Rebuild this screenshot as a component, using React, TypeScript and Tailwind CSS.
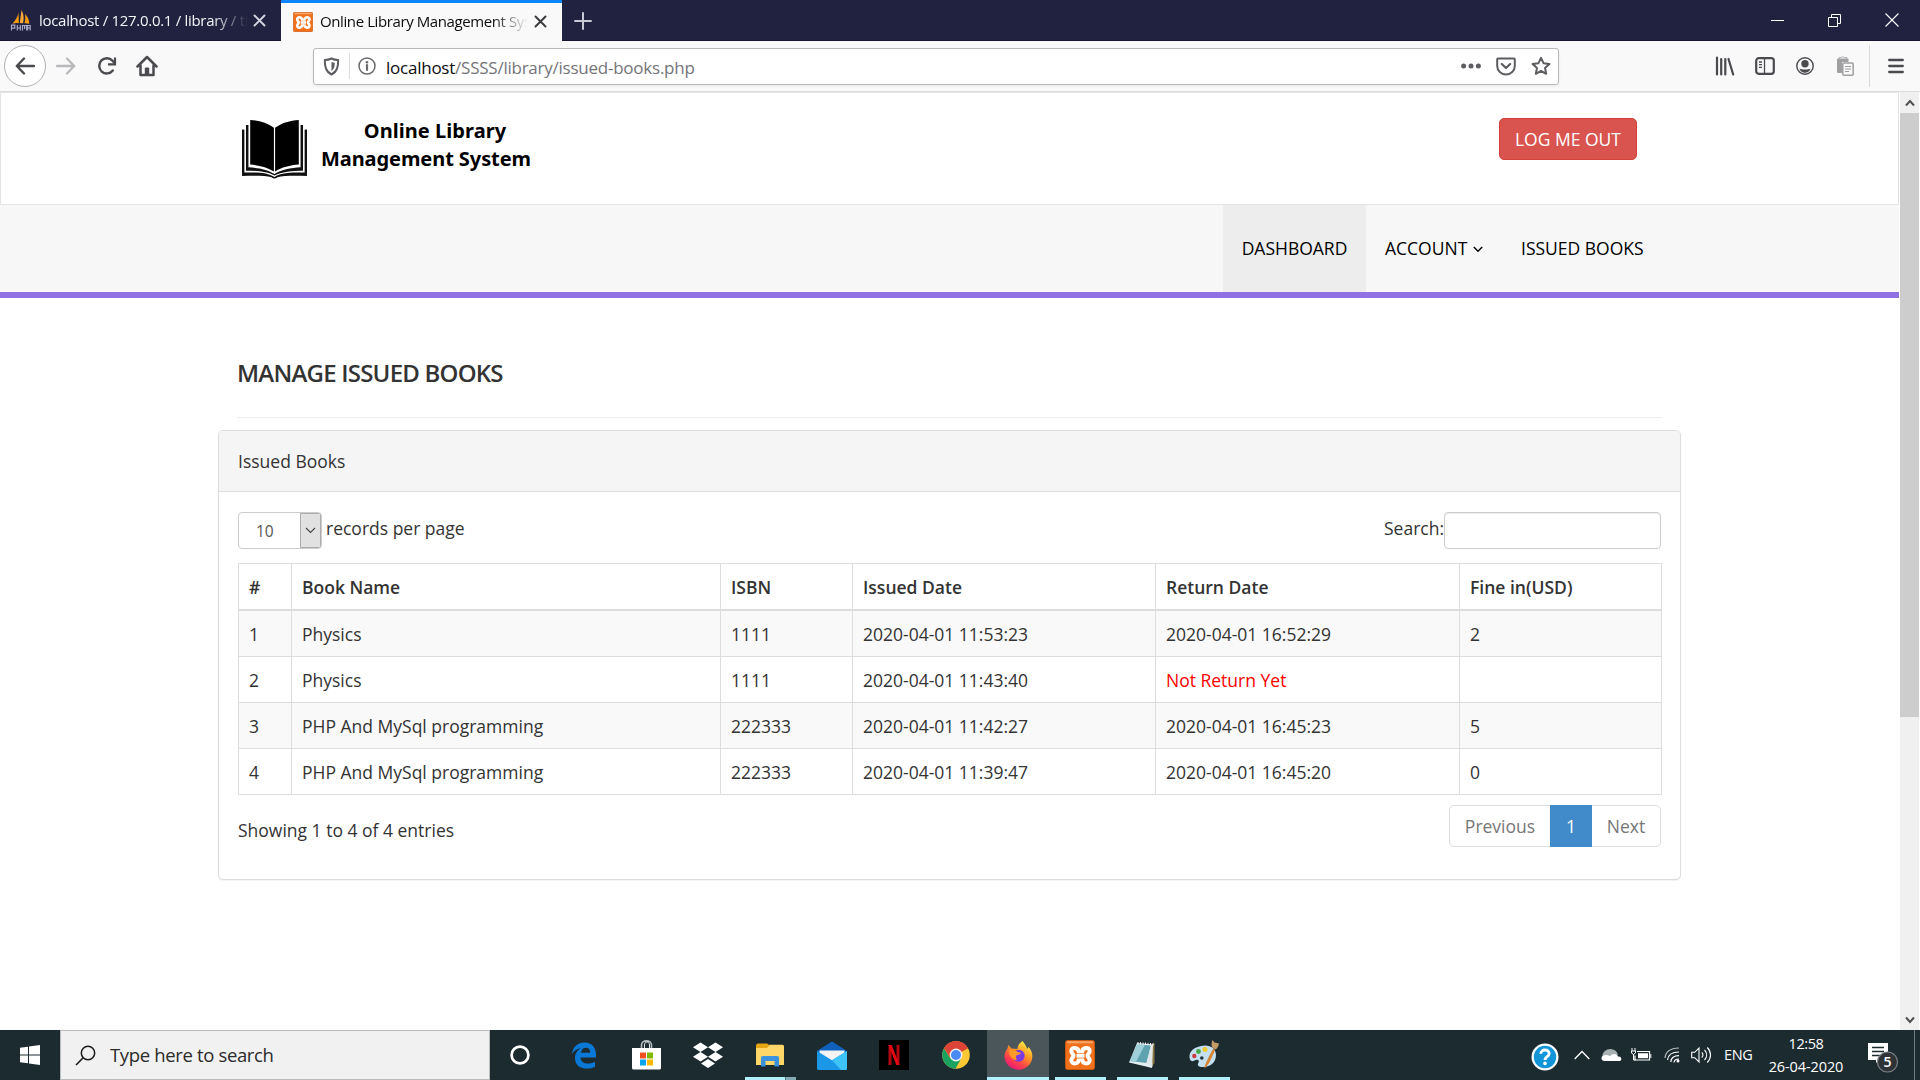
import React from "react";

type IconProps = { className?: string };

function Box({ w, h, vb, className = "", children }: { w: number; h: number; vb?: string; className?: string; children: React.ReactNode }) {
  return (
    <svg width={w} height={h} viewBox={vb ?? `0 0 ${w} ${h}`} className={`block shrink-0 ${className}`} fill="none">
      {children}
    </svg>
  );
}

function XamppIcon({ size, h }: { size: number; h: number }) {
  return (
    <svg width={size} height={h} viewBox="0 0 30 30" preserveAspectRatio="none" className="block shrink-0">
      <rect x="0.5" y="0.5" width="29" height="29" rx="2" fill="#f0701c" stroke="#c9580f" />
      <rect x="2" y="1.200" width="26" height="2" rx="1" fill="#f9a76c" />
      <g fill="none" stroke="#fff" strokeWidth="4" strokeLinejoin="round">
        <path d="M14 13C14 7 6 6.500 6.300 11.300c.2 2 2.200 2.700 2.200 4.400s-2 2.400-2.200 4.400C6 25 14 24.500 14 18.500" />
        <path d="M17 13C17 7 25 6.500 24.700 11.300c-.2 2-2.200 2.700-2.200 4.400s2 2.400 2.200 4.400C25 25 17 24.500 17 18.500" />
        <path d="M11.500 15.700h8" />
      </g>
    </svg>
  );
}

function TabClose({ className = "" }: IconProps) {
  return (
    <Box w={13} h={13} className={className}>
      <path d="M1.500 1.500l10 10M11.500 1.500l-10 10" stroke="currentColor" strokeWidth="1.900" strokeLinecap="round" />
    </Box>
  );
}

function TabStrip() {
  return (
    <div className="flex h-[41px] border-b border-[#16172e] bg-[#20223f] text-[15px] tracking-[-0.3px]">
      <div className="flex h-[41px] w-[281px] items-center text-[#f4f4f8]">
        <Box w={21} h={21} className="ml-[10px]">
          <path d="M8.500 1.500C8.500 6 5.500 10 2.500 13.800c2.500-.8 4.500-.8 6.300-.6z" fill="#f89c0e" />
          <path d="M11.500 0c2.500 4 2.500 9 1.500 13.300l-3.200-.2z" fill="#f9a93a" />
          <path d="M15 4c3 3 4 6 4.300 9.800-1.800-.6-3.300-.8-4.800-.6C15.500 10 15.500 7 15 4z" fill="#f89c0e" />
          <path d="M1.500 20.500v-5.300h3.300v3H2M7.300 20.500v-5.500M7.300 18h3V15v5.500M12.500 20.500v-5h4.200v5M14.600 15.500V19M17.500 18h2.700M17.500 20.500v-5h2.700v5" stroke="#a9abc6" strokeWidth="1.200" />
        </Box>
        <div className="ml-[8px] w-[209px] overflow-hidden whitespace-nowrap [mask-image:linear-gradient(to_right,#000_83%,transparent_100%)]">
          localhost / 127.0.0.1 / library / tb
        </div>
        <TabClose className="ml-[5px] text-[#d5d5df]" />
      </div>
      <div className="flex h-[42px] w-[281px] items-center border-t-[3px] border-[#0a84ff] bg-[#f9f9fa] pb-[2px] text-[#0c0c0d]">
        <div className="ml-[12px]">
          <XamppIcon size={20} h={20} />
        </div>
        <div className="ml-[7px] w-[208px] overflow-hidden whitespace-nowrap tracking-[-0.4px] [mask-image:linear-gradient(to_right,#000_83%,transparent_100%)]">
          Online Library Management System
        </div>
        <TabClose className="ml-[6px] text-[#38383d]" />
      </div>
      <div className="flex h-[41px] w-[42px] items-center justify-center">
        <Box w={18} h={18}>
          <path d="M9 1v16M1 9h16" stroke="#c9c9d6" strokeWidth="2" strokeLinecap="round" />
        </Box>
      </div>
      <div className="ml-auto flex h-[40px] w-[171px] items-center">
        <div className="flex w-[57px] justify-center">
          <Box w={13} h={13}>
            <path d="M0 6.500h13" stroke="#fff" />
          </Box>
        </div>
        <div className="flex w-[57px] justify-center">
          <Box w={13} h={13}>
            <path d="M.5 3.500h9v9h-9zM3.500 3.500v-3h9v9h-3" stroke="#fff" />
          </Box>
        </div>
        <div className="flex w-[57px] justify-center">
          <Box w={14} h={14}>
            <path d="M.5.5l13 13M13.500.5l-13 13" stroke="#fff" strokeWidth="1.100" />
          </Box>
        </div>
      </div>
    </div>
  );
}

function Toolbar() {
  return (
    <div className="flex h-[51px] items-center border-b border-[#dcdcdc] bg-[#f9f9fa]">
      <div className="ml-[4px] flex h-[42px] w-[42px] items-center justify-center rounded-full border border-[#b1b1b1] bg-white">
        <Box w={20} h={18}>
          <path d="M19 9H2M9 1.500L1.800 9 9 16.500" stroke="#4a4a4f" strokeWidth="2.400" strokeLinecap="round" strokeLinejoin="round" />
        </Box>
      </div>
      <Box w={20} h={18} className="ml-[10px]">
        <path d="M1 9h17M11 1.500L18.200 9 11 16.500" stroke="#b9b9bb" strokeWidth="2.300" strokeLinecap="round" strokeLinejoin="round" />
      </Box>
      <Box w={20} h={20} className="ml-[21px]">
        <path d="M15.800 14.500A7.600 7.600 0 1 1 15.500 4.800L17.500 7" stroke="#4a4a4f" strokeWidth="2.400" strokeLinecap="round" />
        <path d="M18 1.500v6.800h-7" stroke="#4a4a4f" strokeWidth="2.200" />
      </Box>
      <Box w={22} h={22} className="ml-[19px]">
        <path d="M1.500 11.500L11 2l9.500 9.500M4.500 10.500V20h13v-9.500" stroke="#4a4a4f" strokeWidth="2.500" strokeLinecap="round" strokeLinejoin="round" />
        <path d="M8.800 20v-6.500a1 1 0 0 1 1-1h2.400a1 1 0 0 1 1 1V20z" fill="#4a4a4f" />
      </Box>
      <div className="ml-[155px] flex h-[37px] w-[1246px] items-center rounded-[3px] border border-[#b9b9bb] bg-white shadow-[0_1px_3px_rgba(0,0,0,0.08)]">
        <Box w={17} h={19} className="ml-[9px]">
          <path d="M8.500 1.500C6.500 2.500 4 3 1.800 3c0 7 1 11.500 6.700 14.500C14.200 14.500 15.200 10 15.200 3 13 3 10.500 2.500 8.500 1.500z" stroke="#5c5c61" strokeWidth="2" strokeLinejoin="round" />
          <path d="M8.500 5c1 .4 2 .6 3.300.7-.1 4-.8 6.300-3.300 8.200z" fill="#5c5c61" />
        </Box>
        <div className="ml-[9px] h-[26px] w-px bg-[#dcdcde]" />
        <Box w={18} h={18} className="ml-[8px]">
          <circle cx="9" cy="9" r="8" stroke="#6a6a6f" strokeWidth="1.500" />
          <path d="M9 8v5" stroke="#6a6a6f" strokeWidth="2.200" strokeLinecap="round" />
          <circle cx="9" cy="5.200" r="1.300" fill="#6a6a6f" />
        </Box>
        <div className="ml-[10px] pt-[3px] text-[17px] tracking-[-0.24px] whitespace-nowrap text-[#747479]">
          <span className="text-[#0c0c0d]">localhost</span>/SSSS/library/issued-books.php
        </div>
        <Box w={20} h={6} className="ml-auto">
          <g fill="#5c5c61">
            <circle cx="2.600" cy="3" r="2.500" />
            <circle cx="10" cy="3" r="2.500" />
            <circle cx="17.400" cy="3" r="2.500" />
          </g>
        </Box>
        <Box w={20} h={19} className="ml-[15px]">
          <path d="M2 1.500h16c.5 0 .8.4.8.9V9c0 4.800-4 8.500-8.800 8.500S1.200 13.800 1.200 9V2.400c0-.5.300-.9.800-.9z" stroke="#5c5c61" strokeWidth="2" />
          <path d="M5.800 7l4.200 4 4.200-4" stroke="#5c5c61" strokeWidth="2.200" strokeLinecap="round" strokeLinejoin="round" />
        </Box>
        <Box w={20} h={20} className="mr-[7px] ml-[15px]">
          <path d="M10 1.800l2.500 5.400 5.900.7-4.400 4 1.200 5.900L10 14.900l-5.200 2.900L6 11.900l-4.400-4 5.900-.7z" stroke="#5c5c61" strokeWidth="2" strokeLinejoin="round" />
        </Box>
      </div>
      <Box w={20} h={20} className="ml-auto">
        <path d="M2 1.500v17M6.200 3v15.500M10.300 3v15.500M13.500 3l4.700 15.500" stroke="#4a4a4f" strokeWidth="2.200" strokeLinecap="round" />
      </Box>
      <Box w={20} h={18} className="ml-[20px]">
        <rect x="1.200" y="1.200" width="17.600" height="15.600" rx="2.500" stroke="#4a4a4f" strokeWidth="2.200" />
        <path d="M9.500 1.500v15M4 5h3M4 7.700h3M4 10.400h3" stroke="#4a4a4f" strokeWidth="1.300" />
      </Box>
      <Box w={18} h={18} className="ml-[21px]">
        <circle cx="9" cy="9" r="8.200" stroke="#4a4a4f" strokeWidth="1.400" />
        <circle cx="9" cy="6.700" r="3.700" fill="#4a4a4f" />
        <path d="M3.500 11.400c2 1.300 9 1.300 11 0-.5 2.400-2.600 4.300-5.500 4.300s-5-1.900-5.500-4.300z" fill="#4a4a4f" />
      </Box>
      <Box w={18} h={20} className="ml-[22px]">
        <path d="M2 2.500h10.500V6H6v11H2a1 1 0 0 1-1-1V3.500a1 1 0 0 1 1-1z" fill="#a0a0a3" />
        <path d="M3 3V1.500h2L6.700.7l1.700.8h2.500V3" stroke="#b4b4b6" />
        <rect x="6.800" y="7" width="10.400" height="12.200" rx="1" fill="#f9f9fa" stroke="#a0a0a3" strokeWidth="1.500" />
        <path d="M9 10.500h6M9 13h6M9 15.500h4" stroke="#a0a0a3" strokeWidth="1.200" />
      </Box>
      <div className="ml-[15px] h-[42px] w-px bg-[#d9d9db]" />
      <Box w={16} h={16} className="mr-[16px] ml-[18px]">
        <path d="M1.200 2h13.600M1.200 8h13.600M1.200 14h13.600" stroke="#4a4a4f" strokeWidth="2.300" strokeLinecap="round" />
      </Box>
    </div>
  );
}

function BookLogo() {
  return (
    <Box w={65} h={60} vb="0 0 66 61">
      <path d="M0 11h2.200v43.500c12-.5 24-.5 30.800 4.500 7-5 19-5 30.800-4.500V11H66v47c-12-.5-24-.5-30 1.300-1.500 1.600-4.500 1.600-6 0C24 57.500 12 57.500 0 58z" fill="#111" />
      <path d="M0 11h2.200v43.500H0zM63.800 11H66v43.500h-2.200z" fill="#111" />
      <path d="M4 6h2.500v43c10 .5 20 2.500 26.500 7 6.500-4.500 16.500-6.500 26.500-7V6H62v46.500c-11 0-22 1-29 5-7-4-18-5-29-5z" fill="#111" />
      <path d="M8.300 1C17 1.500 26 4 32.400 9v44.500C26 49 17 47 8.300 46.300z" fill="#000" />
      <path d="M57.700 1C49 1.500 40 4 33.600 9v44.500C40 49 49 47 57.700 46.300z" fill="#000" />
    </Box>
  );
}

function SiteHeader() {
  return (
    <header className="flex h-[113px] border border-[#e3e4e4] bg-white">
      <div className="mt-[26px] ml-[241px]">
        <BookLogo />
      </div>
      <div className="mt-[24px] ml-[13px] w-[212px] text-center font-['Noto_Sans'] text-[20px] leading-[27.500px] font-bold whitespace-nowrap text-black">
        <div className="pl-[18px] tracking-[0.05px]">Online Library</div>
        <div className="tracking-[-0.08px]">Management System</div>
      </div>
      <button className="mt-[25px] mr-[261px] ml-auto flex h-[42px] w-[138px] items-center justify-center rounded-[5px] border border-[#d43f3a] bg-[#d9534f] text-[17.5px] whitespace-nowrap text-white">
        LOG ME OUT
      </button>
    </header>
  );
}

function Menu() {
  return (
    <nav className="flex h-[93px] justify-end border-b-[6px] border-[#9170e4] bg-[#f7f7f7] pr-[237px] text-[17.5px] whitespace-nowrap text-black">
      <a className="flex w-[143px] items-center justify-center bg-[#ededed]">DASHBOARD</a>
      <a className="flex w-[155px] items-center pl-[19px]">
        ACCOUNT
        <Box w={10} h={7} className="mt-[2px] ml-[6px]">
          <path d="M.8 1l4.200 4.300L9.200 1" stroke="#000" strokeWidth="1.400" />
        </Box>
      </a>
      <a className="flex w-[141px] items-center">ISSUED BOOKS</a>
    </nav>
  );
}

const rows = [
  ["1", "Physics", "1111", "2020-04-01 11:53:23", "2020-04-01 16:52:29", "2"],
  ["2", "Physics", "1111", "2020-04-01 11:43:40", "", ""],
  ["3", "PHP And MySql programming", "222333", "2020-04-01 11:42:27", "2020-04-01 16:45:23", "5"],
  ["4", "PHP And MySql programming", "222333", "2020-04-01 11:39:47", "2020-04-01 16:45:20", "0"],
];

const headings = ["#", "Book Name", "ISBN", "Issued Date", "Return Date", "Fine in(USD)"];

function IssuedTable() {
  return (
    <table className="mt-[14px] w-[1424px] table-fixed border-separate border-spacing-0 border-t border-l border-[#dddddd]">
      <colgroup>
        <col className="w-[53px]" />
        <col className="w-[429px]" />
        <col className="w-[132px]" />
        <col className="w-[303px]" />
        <col className="w-[304px]" />
        <col className="w-[202px]" />
      </colgroup>
      <thead>
        <tr>
          {headings.map((h) => (
            <th key={h} className="h-[47px] border-r border-b-2 border-[#dddddd] px-[10px] pt-[2px] text-left font-semibold">
              {h}
            </th>
          ))}
        </tr>
      </thead>
      <tbody>
        {rows.map((r) => (
          <tr key={r[0]} className="odd:bg-[#f9f9f9]">
            {r.map((c, i) => (
              <td key={i} className="h-[46px] border-r border-b border-[#dddddd] px-[10px] pt-[2px]">
                {i === 4 && c === "" ? <span className="text-[#ff0000]">Not Return Yet</span> : c}
              </td>
            ))}
          </tr>
        ))}
      </tbody>
    </table>
  );
}

function Page() {
  return (
    <main className="w-[1899px] text-[17.5px] text-[#333333]">
      <SiteHeader />
      <Menu />
      <h4 className="mt-[59px] ml-[237px] text-[24px] leading-[32px] font-semibold tracking-[-0.78px]">MANAGE ISSUED BOOKS</h4>
      <div className="mt-[28px] ml-[237px] h-px w-[1425px] bg-[#eeeeee]" />
      <section className="mt-[12px] ml-[218px] h-[450px] w-[1463px] rounded-[5px] border border-[#dddddd] bg-white shadow-[0_1px_1px_rgba(0,0,0,0.05)]">
        <div className="flex h-[61px] items-center rounded-t-[4px] border-b border-[#dddddd] bg-[#f5f5f5] pl-[19px]">Issued Books</div>
        <div className="pt-[20px] pl-[19px]">
          <div className="flex h-[37px] w-[1423px]">
            <div className="flex h-[37px] w-[84px] items-center overflow-hidden rounded-[4px] border border-[#cccccc] text-[15.500px] text-[#555555]">
              <span className="w-[62px] pt-[2px] pl-[17px]">10</span>
              <span className="flex h-[35px] w-[21px] items-center justify-center border border-[#adadad] bg-[#e1e1e1]">
                <Box w={11} h={7}>
                  <path d="M1 1l4.500 4.500L10 1" stroke="#444" strokeWidth="1.100" />
                </Box>
              </span>
            </div>
            <span className="ml-[4px] pt-[3px]">records per page</span>
            <span className="ml-auto pt-[3px]">Search:</span>
            <div className="h-[37px] w-[217px] rounded-[4px] border border-[#cccccc] bg-white shadow-[inset_0_1px_1px_rgba(0,0,0,0.075)]" />
          </div>
          <IssuedTable />
          <div className="flex w-[1423px] items-start justify-between pt-[10px]">
            <span className="pt-[12px]">Showing 1 to 4 of 4 entries</span>
            <div className="flex h-[42px] w-[212px] rounded-[5px] border border-[#dddddd] text-[#777777]">
              <span className="flex w-[100px] items-center justify-center">Previous</span>
              <span className="-my-px flex w-[42px] items-center justify-center bg-[#428bca] text-white">1</span>
              <span className="flex flex-1 items-center justify-center">Next</span>
            </div>
          </div>
        </div>
      </section>
    </main>
  );
}

function Scrollbar() {
  return (
    <div className="flex w-[21px] flex-col items-center border-x border-white bg-[#f0f0f0]">
      <div className="flex h-[21px] items-center">
        <Box w={10} h={8}>
          <path d="M1 6.500l4-4.500 4 4.500" stroke="#505050" strokeWidth="2" />
        </Box>
      </div>
      <div className="h-[604px] w-[19px] bg-[#cdcdcd]" />
      <div className="mt-auto flex h-[21px] items-center">
        <Box w={10} h={8}>
          <path d="M1 1.500L5 6l4-4.500" stroke="#505050" strokeWidth="2" />
        </Box>
      </div>
    </div>
  );
}

function FirefoxIcon() {
  return (
    <svg width="29" height="29" viewBox="0 0 29 29" className="block">
      <defs>
        <linearGradient id="ffBody" x1="0.8" y1="0.1" x2="0.25" y2="1">
          <stop offset="0" stopColor="#ffe847" />
          <stop offset="0.35" stopColor="#ff9a22" />
          <stop offset="0.7" stopColor="#ff3f4c" />
          <stop offset="1" stopColor="#e4157e" />
        </linearGradient>
      </defs>
      <path d="M18.500 0c2.500 3 4 5.500 4.500 8l1.500-2c2.800 3 4.100 6 3.800 10-.4 7.300-6.300 12.700-13.800 12.700S.7 23 .5 15.800c0-3.300 1-6 2.800-8L4.500 4 7.500 7.500 13.500 8c0-3.500 2.500-6.500 5-8z" fill="url(#ffBody)" />
      <circle cx="14.700" cy="14.700" r="6" fill="#7a3be0" />
      <path d="M5 10c2-2.500 7-1.500 8.500 1l3.500.8c-.5 1.500-2.500 2-4.500 2.500-1 1.700-.5 3.500.8 4.700-3.300.3-8-2-8.300-9z" fill="#ff9a28" />
      <path d="M15 7.500c4 .5 7 3.500 6.500 7.500 3-4 0-9-5-10z" fill="#ffb42e" />
    </svg>
  );
}

function TaskCell({ children, line, active, stacked }: { children: React.ReactNode; line?: boolean; active?: boolean; stacked?: boolean }) {
  return (
    <div className={active ? "flex h-[50px] w-[62px] flex-col items-center bg-[#4a565a]" : "flex h-[50px] w-[62px] flex-col items-center"}>
      <div className="flex h-[47px] items-center pt-[3px]">{children}</div>
      {active ? (
        <div className="h-[3px] w-full bg-[#b3f0ff]" />
      ) : stacked ? (
        <div className="flex h-[3px] w-[51px] justify-end bg-[#b3f0ff]">
          <div className="w-[11px] border-l border-[#5d7a83] bg-[#84aab5]" />
        </div>
      ) : line ? (
        <div className="h-[3px] w-[51px] bg-[#b3f0ff]" />
      ) : null}
    </div>
  );
}

function Taskbar() {
  return (
    <footer className="flex h-[50px] bg-[#1c2b30] text-white">
      <div className="flex w-[60px] items-center justify-center">
        <Box w={20} h={20}>
          <path d="M0 2.800L8 1.700v7.800H0zM9 1.500L20 0v9.500H9zM0 10.500h8v7.800l-8-1.100zM9 10.500h11V20L9 18.500z" fill="#fff" />
        </Box>
      </div>
      <div className="flex w-[430px] items-center border border-[#b9bcbd] bg-[#f1f1f1] text-[#2b2b2b]">
        <Box w={21} h={21} className="ml-[14px]">
          <circle cx="13" cy="8" r="6.700" stroke="#1a1a1a" strokeWidth="1.500" />
          <path d="M8.200 12.800L1 20" stroke="#1a1a1a" strokeWidth="1.600" />
        </Box>
        <span className="ml-[14px] text-[18.500px] tracking-[-0.35px] whitespace-nowrap">Type here to search</span>
      </div>
      <div className="-ml-px flex">
        <div className="mr-[2px]">
          <TaskCell>
            <Box w={20} h={20}>
              <circle cx="10" cy="10" r="8.400" stroke="#fff" strokeWidth="2.700" />
            </Box>
          </TaskCell>
        </div>
        <TaskCell>
          <Box w={26} h={27}>
            <path d="M1 12C2 4.500 7 .5 13.500.5c7.500 0 11.500 5 11.500 12v3H9.500c.2 4 3.200 6 7.500 6 2.800 0 5-.7 7-1.800v5c-2.300 1.300-5 1.900-8.300 1.900C8.500 26.600 4 22.500 4 16c0-4.500 2.300-7.800 6-9.800C6 6.500 3 8.700 1 12zm9-1.300h9.200c0-3-1.500-4.900-4.300-4.900-2.700 0-4.500 2-4.900 4.900z" fill="#0a78d7" />
          </Box>
        </TaskCell>
        <TaskCell>
          <Box w={29} h={30}>
            <path d="M9.500 10V5c0-5.500 10-5.500 10 0v5" stroke="#b9c0c2" strokeWidth="1.600" />
            <path d="M12.500 8V5c0-4 5-4 5 0v3" stroke="#e3e6e7" />
            <path d="M0 8h29v20a1.500 1.500 0 0 1-1.500 1.500h-26A1.500 1.500 0 0 1 0 28z" fill="#fff" />
            <path d="M8 12.500h6v6H8z" fill="#f25022" />
            <path d="M15 12.500h6v6h-6z" fill="#7fba00" />
            <path d="M8 19.500h6v6H8z" fill="#00a4ef" />
            <path d="M15 19.500h6v6h-6z" fill="#ffb900" />
          </Box>
        </TaskCell>
        <TaskCell>
          <Box w={30} h={27}>
            <path d="M7.500.5L15 5.300 7.500 10 0 5.300zM22.500.5L30 5.300 22.500 10 15 5.300zM7.500 10L15 14.700 7.500 19.500 0 14.700zM22.500 10L30 14.700l-7.500 4.800L15 14.700zM15 17l7 4.400L15 26l-7-4.600z" fill="#fff" />
          </Box>
        </TaskCell>
        <TaskCell stacked>
          <Box w={28} h={24}>
            <path d="M0 4h11l2.500-2.200H26.500A1.500 1.500 0 0 1 28 3.300V22H0z" fill="#ffd667" />
            <path d="M0 2v3h11l2.500-3L11 .5H1.500z" fill="#e6a614" />
            <path d="M5 23.500V15a2 2 0 0 1 2-2h14a2 2 0 0 1 2 2v8.500h-4.500V18h-9v5.500z" fill="#3b93dd" />
          </Box>
        </TaskCell>
        <TaskCell>
          <Box w={30} h={29}>
            <path d="M0 10L15 .5 30 10v2H0z" fill="#0e62bd" />
            <path d="M2.500 9.500h25v8L15 20 2.500 17z" fill="#f3f3f3" />
            <path d="M0 10l15 9.300L30 10v17.500a1.500 1.500 0 0 1-1.500 1.500h-27A1.500 1.500 0 0 1 0 27.500z" fill="#1a97e6" />
            <path d="M15 19.300L30 10v17.500a1.500 1.500 0 0 1-1.500 1.500H24z" fill="#3dc3f5" />
          </Box>
        </TaskCell>
        <TaskCell>
          <Box w={30} h={30}>
            <path d="M0 0h30v30H0z" fill="#000" />
            <path d="M9.500 5h3v20h-3zM17.500 5h3v20h-3z" fill="#b20710" />
            <path d="M9.500 5h3.200l7.800 20h-3.200z" fill="#e50914" />
          </Box>
        </TaskCell>
        <TaskCell>
          <Box w={28} h={28}>
            <circle cx="14" cy="14" r="13.800" fill="#fcc934" />
            <path d="M14 14L2 7.200A13.800 13.800 0 0 1 26 7.200z" fill="#dc4437" />
            <path d="M2 7.200A13.800 13.800 0 0 0 13.500 27.800L19.500 17 14 14 8.500 17.500z" fill="#1aa260" />
            <path d="M14 7.300h12.100A13.800 13.800 0 0 0 2 7.200L8.300 17z" fill="#dc4437" />
            <circle cx="14" cy="14" r="6.400" fill="#f4f4f4" />
            <circle cx="14" cy="14" r="5" fill="#4a8af4" />
          </Box>
        </TaskCell>
        <TaskCell active>
          <FirefoxIcon />
        </TaskCell>
        <TaskCell line>
          <XamppIcon size={30} h={30} />
        </TaskCell>
        <TaskCell line>
          <Box w={28} h={28}>
            <path d="M26.500 2v20l-3 4L22 4z" fill="#8b7743" />
            <path d="M9 2l16 1.500L24 27l-6-1.500L1 21.500z" fill="#e4eef0" />
            <path d="M9.500 3l13.500 1.500-4.500 17.500L2 20z" fill="#5fa3b1" />
            <path d="M9.500 3L2 20l6 .7L17 3.800z" fill="#9fd0da" />
            <path d="M23 4.500l1.500 21.500-6-4z" fill="#dfe6e8" />
            <path d="M10 1v2.500M12.500 1.200v2.500M15 1.400v2.500M17.500 1.600v2.500M20 1.800v2.500M22.500 2v2.500M25 2.200v2.500" stroke="#f2f5f6" />
          </Box>
        </TaskCell>
        <TaskCell line>
          <Box w={30} h={30}>
            <path d="M12 6c8-2 15 2 15 9 0 8-6 12-13 12-5 0-6-2-4.500-4.500C11 20 8 19 5.500 20.500 2 22.500.5 20 .5 16.500.5 11 5 7.500 12 6z" fill="#c4dfef" />
            <circle cx="5.300" cy="16" r="2.200" fill="#cb3c43" />
            <circle cx="9.500" cy="11.500" r="2.400" fill="#43a843" />
            <circle cx="16" cy="9.500" r="2.500" fill="#f2cb2e" />
            <circle cx="12.800" cy="18" r="1.800" fill="#26343a" />
            <path d="M15.500 28.500c0-4 5-13 8.500-19.500l2 1c-3 7-6 15-10.500 18.500z" fill="#d98332" />
            <path d="M23.500 8c-1.500-3-1-5 0-8l2 2.500L30 3.500c-.5 2.500-1.500 5-3.500 6z" fill="#c39a68" />
          </Box>
        </TaskCell>
      </div>
      <div className="ml-auto flex w-[389px] items-center">
        <Box w={28} h={28} className="mt-[3px]">
          <circle cx="14" cy="14" r="13.500" fill="#fff" />
          <circle cx="14" cy="14" r="11.200" fill="#1295d8" />
          <path d="M9.800 10.800c0-5 8.400-5 8.400-.3 0 3.200-4.200 3.200-4.200 6.500" stroke="#fff" strokeWidth="2.800" />
          <circle cx="14" cy="20.400" r="1.800" fill="#fff" />
        </Box>
        <Box w={16} h={10} className="ml-[15px]">
          <path d="M.7 9L8 1.500 15.300 9" stroke="#fff" strokeWidth="1.300" />
        </Box>
        <Box w={21} h={14} className="ml-[11px]">
          <path d="M1.500 8C1 4.500 6 .5 10.500 1.200c4 .5 6 3 6.500 6L10 10z" fill="#a7b0b3" />
          <path d="M3.500 13C0 13-.5 8.500 2.500 7.500 4.500 6.500 7 7 9 8.200c2-3.200 6.500-3 8 .3 4-.6 4.500 4.500 1 4.500z" fill="#fff" />
        </Box>
        <Box w={21} h={14} className="ml-[9px]">
          <path d="M6 3.500h12.500v8.500H4V7.500" stroke="#fff" strokeWidth="1.200" />
          <path d="M7 5.200h10v5H7z" fill="#fff" />
          <path d="M19.800 6v4M1 0v3M4 0v3M.5 3h4v2l-2 1.500L.5 5zM2.500 6v6h2" stroke="#fff" />
        </Box>
        <Box w={16} h={16} className="ml-[12px]">
          <path d="M1 11C1.500 5.500 6 1.200 15 1" stroke="#b7bfc1" strokeWidth="1.200" />
          <path d="M3.500 13c.5-5 4.500-8 11.500-8M6.800 15c.3-4 3-6.300 8.200-6.300M10 15.500c.2-2.200 1.700-3.400 5-3.500" stroke="#fff" strokeWidth="1.200" />
          <circle cx="14" cy="14" r="1.500" fill="#fff" />
        </Box>
        <Box w={21} h={18} className="ml-[11px]">
          <path d="M.7 6.300h3L8 2v14l-4.300-4.300h-3z" stroke="#fff" strokeWidth="1.100" />
          <path d="M10.800 6.500c1.400 1.500 1.400 3.500 0 5M13.500 4c2.800 3 2.800 7 0 10M16.300 1.500c4.300 4.500 4.300 10.500 0 15" stroke="#fff" strokeWidth="1.100" />
        </Box>
        <span className="ml-[12px] w-[29px] text-[14.500px] tracking-[-0.3px]">ENG</span>
        <div className="ml-[13px] w-[80px] text-center text-[14.500px] leading-[23px] tracking-[-0.1px] whitespace-nowrap">
          <div className="tracking-[-0.4px]">12:58</div>
          <div>26-04-2020</div>
        </div>
        <Box w={32} h={32} className="mt-[5px] ml-[22px]">
          <path d="M0 1h20v17h-9l-3 3v-3H0z" fill="#fff" />
          <path d="M4 5.500h12M4 9.500h12M4 13.500h8" stroke="#1c2b30" strokeWidth="1.300" />
          <circle cx="19.500" cy="20" r="10" fill="#2f3336" stroke="#7c8386" strokeWidth="1.200" />
          <text x="19.500" y="25" textAnchor="middle" fill="#fff" fontSize="14" fontWeight="600">
            5
          </text>
        </Box>
        <div className="mr-[5px] ml-auto h-[50px] w-px bg-[#6f7a7e]" />
      </div>
    </footer>
  );
}

export default function App() {
  return (
    <div className="flex h-[1080px] w-[1920px] flex-col overflow-hidden bg-white font-['Open_Sans',sans-serif]">
      <TabStrip />
      <Toolbar />
      <div className="flex h-[938px]">
        <Page />
        <Scrollbar />
      </div>
      <Taskbar />
    </div>
  );
}
